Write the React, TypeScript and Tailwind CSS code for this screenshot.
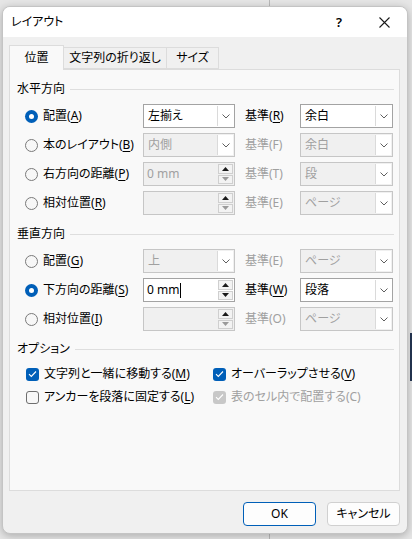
import React from "react";

const FONT = "[font-family:'Noto_Sans','Noto_Sans_CJK_JP',sans-serif] [font-feature-settings:'palt']";

function Key({ text, k, after = ")" }: { text: string; k: string; after?: string }) {
  return (
    <span>
      {text}(<span className="underline underline-offset-[2px] decoration-1">{k}</span>
      {after}
    </span>
  );
}

function Radio({ checked }: { checked?: boolean }) {
  return checked ? (
    <span className="flex h-[13px] w-[13px] items-center justify-center rounded-full bg-[#005fb8]">
      <span className="h-[5px] w-[5px] rounded-full bg-white" />
    </span>
  ) : (
    <span className="h-[13px] w-[13px] rounded-full border border-[#7a7a7a] bg-[#f7f7f7]" />
  );
}

function Check({ checked, disabled }: { checked?: boolean; disabled?: boolean }) {
  if (!checked)
    return <span className="h-[13px] w-[13px] rounded-[3px] border border-[#6e6e6e] bg-[#f7f7f7]" />;
  return (
    <span
      className={`flex h-[13px] w-[13px] items-center justify-center rounded-[3px] ${
        disabled ? "bg-[#c8c8c8]" : "bg-[#005fb8]"
      }`}
    >
      <svg width="9" height="8" viewBox="0 0 9 8" fill="none">
        <path d="M1 4.2l2.3 2.3L8 1.5" stroke="white" strokeWidth="1.1" />
      </svg>
    </span>
  );
}

function Chevron() {
  return (
    <svg width="8" height="5" viewBox="0 0 8 5" fill="none">
      <path d="M0.5 0.5l3.5 3.5 3.5-3.5" stroke="#5f5f5f" strokeWidth="1" />
    </svg>
  );
}

function Combo({ value, enabled, w }: { value: string; enabled?: boolean; w: string }) {
  return (
    <div
      className={`flex h-[24px] ${w} border ${
        enabled ? "border-[#a3a3a3] bg-white text-black" : "border-[#c6c6c6] bg-[#f0f0f0] text-[#a0a0a0]"
      }`}
    >
      <div className="flex flex-1 items-center pl-[4px] text-[12px] leading-[16px]">{value}</div>
      <div className="my-px mr-px flex w-[16px] items-center justify-center border-l border-[#dadada] bg-white">
        <Chevron />
      </div>
    </div>
  );
}

function Tri({ up, dark }: { up?: boolean; dark?: boolean }) {
  return (
    <svg width="7" height="4" viewBox="0 0 7 4">
      <path d={up ? "M0 4L3.5 0L7 4Z" : "M0 0L3.5 4L7 0Z"} fill={dark ? "#1a1a1a" : "#9a9a9a"} />
    </svg>
  );
}

function Spin({ value, enabled, caret }: { value: string; enabled?: boolean; caret?: boolean }) {
  return (
    <div
      className={`flex h-[24px] w-[92px] border ${
        enabled ? "border-[#a3a3a3] bg-white text-black" : "border-[#c6c6c6] bg-[#f0f0f0] text-[#a0a0a0]"
      }`}
    >
      <div className="flex flex-1 items-center pl-[3px] text-[12px] leading-[16px]">
        {value}
        {caret && <span className="ml-px h-[15px] w-px bg-black" />}
      </div>
      <div className="my-px mr-px flex w-[15px] flex-col gap-px">
        <div className="flex flex-1 items-center justify-center border border-[#cfcfcf] bg-[#f3f3f3]">
          <Tri up dark />
        </div>
        <div className="flex flex-1 items-center justify-center border border-[#cfcfcf] bg-[#f3f3f3]">
          <Tri dark={enabled} />
        </div>
      </div>
    </div>
  );
}

function Header({ title }: { title: string }) {
  return (
    <div className="flex items-center gap-[5px] pl-[7px] pr-[5px] text-[12px] leading-[16px] text-black">
      <span>{title}</span>
      <span className="h-px flex-1 bg-[#dedede]" />
    </div>
  );
}

type RowProps = {
  checked?: boolean;
  label: React.ReactNode;
  left: React.ReactNode;
  base: React.ReactNode;
  baseOn?: boolean;
  right: React.ReactNode;
};

function Row({ checked, label, left, base, baseOn, right }: RowProps) {
  return (
    <div className="flex h-[24px] items-center pl-[15px] text-[12px] leading-[16px]">
      <div className="flex w-[118px] items-center gap-[5px] text-black">
        <Radio checked={checked} />
        <span className="whitespace-nowrap">{label}</span>
      </div>
      {left}
      <div className={`ml-[10px] w-[55px] whitespace-nowrap ${baseOn ? "text-black" : "text-[#a0a0a0]"}`}>{base}</div>
      {right}
    </div>
  );
}

export default function App() {
  return (
    <div className={`relative h-[539px] w-[412px] overflow-hidden bg-[#e6e6e6] ${FONT}`}>
      <div className="absolute left-[269px] top-0 h-full w-px bg-[#b9b9b9]" />
      <div className="absolute left-[410px] top-[333px] h-[48px] w-[2px] bg-[#243552]" />

      <div className="relative ml-[2px] mt-[6px] flex h-[528px] w-[406px] flex-col overflow-hidden rounded-[8px] border border-[#c4c4c4] bg-[#f0f0f0] shadow-[0_2px_8px_rgba(0,0,0,0.25)]">
        {/* title bar */}
        <div className="flex h-[30px] items-center bg-white pl-[8px] text-[12px] leading-[16px] text-black">
          <span>レイアウト</span>
          <span className="ml-auto mr-[37px] text-[13px] font-semibold">?</span>
          <svg width="11" height="11" viewBox="0 0 11 11" className="mr-[17px]">
            <path d="M0.5 0.5l10 10M10.5 0.5l-10 10" stroke="#1a1a1a" strokeWidth="1.1" />
          </svg>
        </div>

        {/* tabs */}
        <div className="ml-[6px] mt-[8px] flex h-[24px] items-end text-[12px] leading-[16px] text-black">
          <div className="relative z-10 -mb-px flex h-[25px] w-[55px] items-center justify-center border border-b-0 border-[#dcdcdc] bg-[#f9f9f9]">
            位置
          </div>
          <div className="flex h-[22px] w-[103px] items-center justify-center border border-l-0 border-[#dcdcdc] bg-[#f0f0f0]">
            文字列の折り返し
          </div>
          <div className="flex h-[22px] w-[52px] items-center justify-center border border-l-0 border-[#dcdcdc] bg-[#f0f0f0]">
            サイズ
          </div>
        </div>

        {/* panel */}
        <div className="ml-[6px] h-[422px] w-[391px] border border-[#dcdcdc] bg-[#f9f9f9] pt-[11px]">
          <Header title="水平方向" />
          <div className="mt-[7px] flex flex-col gap-[5px]">
            <Row
              checked
              label={<Key text="配置" k="A" />}
              left={<Combo value="左揃え" enabled w="w-[92px]" />}
              base={<Key text="基準" k="R" />}
              baseOn
              right={<Combo value="余白" enabled w="w-[93px]" />}
            />
            <Row
              label={<Key text="本のレイアウト" k="B" />}
              left={<Combo value="内側" w="w-[92px]" />}
              base="基準(F)"
              right={<Combo value="余白" w="w-[93px]" />}
            />
            <Row
              label={<Key text="右方向の距離" k="P" />}
              left={<Spin value="0 mm" />}
              base="基準(T)"
              right={<Combo value="段" w="w-[93px]" />}
            />
            <Row
              label={<Key text="相対位置" k="R" />}
              left={<Spin value="" />}
              base="基準(E)"
              right={<Combo value="ページ" w="w-[93px]" />}
            />
          </div>

          <div className="mt-[11px]">
            <Header title="垂直方向" />
          </div>
          <div className="mt-[7px] flex flex-col gap-[5px]">
            <Row
              label={<Key text="配置" k="G" />}
              left={<Combo value="上" w="w-[92px]" />}
              base="基準(E)"
              right={<Combo value="ページ" w="w-[93px]" />}
            />
            <Row
              checked
              label={<Key text="下方向の距離" k="S" />}
              left={<Spin value="0 mm" enabled caret />}
              base={<Key text="基準" k="W" />}
              baseOn
              right={<Combo value="段落" enabled w="w-[93px]" />}
            />
            <Row
              label={<Key text="相対位置" k="I" />}
              left={<Spin value="" />}
              base="基準(O)"
              right={<Combo value="ページ" w="w-[93px]" />}
            />
          </div>

          <div className="mt-[10px]">
            <Header title="オプション" />
          </div>
          <div className="mt-[8px] flex flex-col gap-[5px] text-[12px] leading-[16px]">
            <div className="flex h-[18px] items-center pl-[16px]">
              <div className="flex w-[187px] items-center gap-[5px] text-black">
                <Check checked />
                <Key text="文字列と一緒に移動する" k="M" />
              </div>
              <div className="flex items-center gap-[5px] text-black">
                <Check checked />
                <Key text="オーバーラップさせる" k="V" />
              </div>
            </div>
            <div className="flex h-[18px] items-center pl-[16px]">
              <div className="flex w-[187px] items-center gap-[5px] text-black">
                <Check />
                <Key text="アンカーを段落に固定する" k="L" />
              </div>
              <div className="flex items-center gap-[5px] text-[#a0a0a0]">
                <Check checked disabled />
                <span>表のセル内で配置する(C)</span>
              </div>
            </div>
          </div>
        </div>

        {/* buttons */}
        <div className="mt-[11px] flex justify-end gap-[11px] pr-[7px] text-[12px] leading-[16px] text-black">
          <button className="h-[24px] w-[73px] rounded-[4px] border border-[#005fb8] bg-[#fdfdfd]">OK</button>
          <button className="h-[24px] w-[73px] rounded-[4px] border border-[#d0d0d0] bg-[#fdfdfd]">キャンセル</button>
        </div>
      </div>
    </div>
  );
}
